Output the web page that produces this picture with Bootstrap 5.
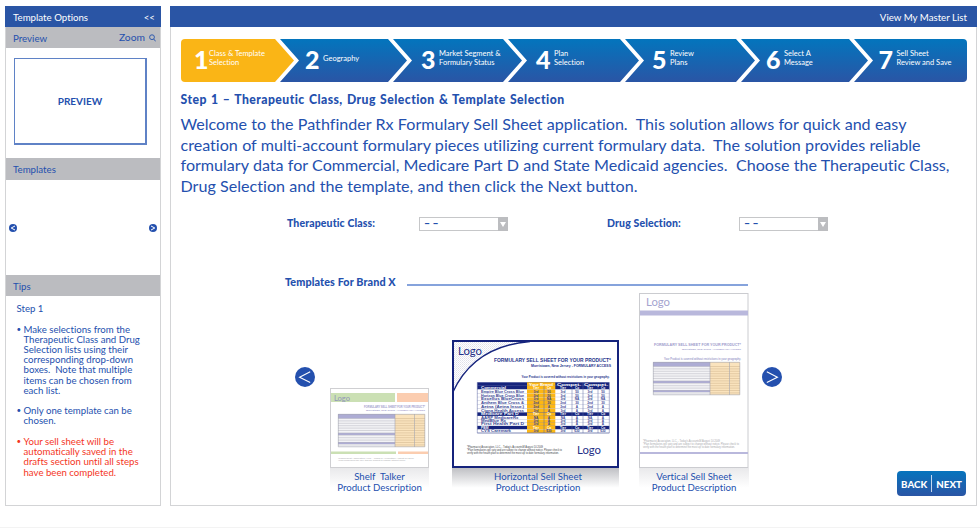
<!DOCTYPE html>
<html lang="en">
<head>
<meta charset="utf-8">
<meta name="viewport" content="width=device-width, initial-scale=1">
<title>Pathfinder Rx Formulary Sell Sheet</title>
<link href="https://cdn.jsdelivr.net/npm/bootstrap@5.3.0/dist/css/bootstrap.min.css" rel="stylesheet">
<style>
:root{--brand:#2a55a5;--ink:#2450ae;--bar:#bbbcc0}
body{font-family:Lato,"Liberation Sans",sans-serif;font-variant-ligatures:none;color:var(--ink);font-size:10px;line-height:1.03;height:528px;overflow:hidden;background:#fff;border-bottom:1px solid #f3f3f3}
.shell{padding:6px 3px 0 5px;gap:9px}
.side{width:156px;height:500px;border:1px solid #d3d4d6}
.main-panel{height:500px;min-width:0;border:1px solid #d3d4d6}
.titlebar{height:21px;background:var(--brand);color:#fff;font-size:9.7px;margin:-1px -1px 0;padding:0 10px 0 8px}
.titlebar.side-title{padding-right:6px}
.greybar{height:21px;background:var(--bar);padding:0 4px 0 7px;font-size:9.7px}
.greybar .zoomer{font-size:10.3px}
.greybar.mid{margin-top:13px;height:22px}
.pager-strip{height:95px;padding:0 3px}
.preview-box{width:133px;height:87px;border:1.5px solid #5f82c6;border-width:1px 2px 2px 1px;margin:10px 0 0 8px;font-size:10px}
.tips{padding:7px 12px 0 10.5px;font-size:9.65px;line-height:10.2px}
.tips .step-name,.tips li{margin-bottom:10.3px}
.tips li{padding-left:7px;position:relative;white-space:nowrap}
.tips li::before{content:"•";position:absolute;left:0;font-size:8px}
.alert-tip{color:#f4361e}
.steps{margin:12px 9px 0 10px;height:43px;border-radius:4px;overflow:hidden}
.stage{height:43px;flex:none;background:linear-gradient(#0375bd,#2a55a5);color:#fff;font-size:7.5px;line-height:8.8px;margin-left:-14px;padding:0 0 3px 27px;
clip-path:polygon(0 0,calc(100% - 19px) 0,100% 50%,calc(100% - 19px) 100%,0 100%,19px 50%);white-space:nowrap}
.stage b{font-size:25px;line-height:40px;width:18px;font-weight:900;flex:none;letter-spacing:-1px}
.stage:first-child{margin-left:0;padding-left:13px;background:#fab516;clip-path:polygon(0 0,calc(100% - 19px) 0,100% 50%,calc(100% - 19px) 100%,0 100%)}
.stage:first-child b{width:15px}
.stage:last-child{clip-path:polygon(0 0,100% 0,100% 100%,0 100%,19px 50%)}
.w1{width:113px}.w2{width:127px;padding-left:25px}.w3{width:129px;padding-left:28px}.w4{width:131px;padding-left:28px}.w5{width:130px}.w7{width:114px;padding-left:24.5px}
.copy{padding:11px 0 0 9.5px}
.copy h1{font-size:12.2px;font-weight:900;line-height:14px;margin:0 0 7px;white-space:nowrap;width:384px;text-align-last:justify;letter-spacing:.45px}
.copy p{font-size:16.1px;line-height:20.6px;margin:0}
.copy p span{display:block;white-space:nowrap;text-align-last:justify}
.fields{margin:20px 0 0 116px;height:15px;font-weight:900;font-size:10.5px}
.fields label{width:132px;white-space:nowrap;letter-spacing:.12px}
.fields .picker{width:89px;height:14px;border:1px solid #c6c7c9;padding-left:4px;background:#fff;margin-right:99px}
.picker i{width:10px;height:14px;background:#bcbdc0;margin-right:-1px}
.brandline{margin:43px 0 0 114px;height:14px;font-weight:900;font-size:10.8px}
.brandline span{width:111px;white-space:nowrap;letter-spacing:.1px}
.brandline hr{width:341px;margin:7px 0 0 11px;height:2px;border:0;background:#86a3dc;opacity:1}
.carousel-row{margin:4px 0 0 124px;height:198px}
.carousel-row svg{display:block}
.round{width:20px;height:20px;flex:none;margin-bottom:103px}
.cap{height:22px;font-size:9.65px;line-height:10.3px;text-align:center;padding-top:3px;background:linear-gradient(#e9e9eb,#fff 90%);white-space:nowrap}
.cap-dark{background:linear-gradient(#bfc0c4,#fff 90%);padding-left:5px}
.navpill{width:69px;height:25px;border-radius:4px;background:linear-gradient(#0674bd,#2a55a5);color:#fff;font-weight:900;font-size:9.7px;position:absolute;right:10px;bottom:9px}
.navpill u{width:1px;height:17px;background:#c5d7ee}
svg text{font-family:Lato,"Liberation Sans",sans-serif}
.tiny text{font-family:"Liberation Sans",sans-serif}
.tiny text.brandmark{font-family:Lato,sans-serif}
</style>
<script src="https://cdn.jsdelivr.net/npm/bootstrap@5.3.0/dist/js/bootstrap.bundle.min.js"></script>
</head>
<body>
<div class="shell d-flex">
  <aside class="side flex-shrink-0">
    <div class="titlebar side-title d-flex justify-content-between align-items-center"><span>Template Options</span><span>&lt;&lt;</span></div>
    <div class="greybar d-flex justify-content-between align-items-center"><span>Preview</span>
      <span class="zoomer d-flex align-items-center">Zoom <svg class="ms-1" width="7" height="8" viewBox="0 0 7 8" fill="none" stroke="#2f5aae"><circle cx="3" cy="3.2" r="2.4"/><path d="M4.7 5 6.7 7.4"/></svg></span></div>
    <div class="preview-box d-flex align-items-center justify-content-center fw-bold">PREVIEW</div>
    <div class="greybar mid d-flex align-items-center">Templates</div>
    <div class="pager-strip d-flex justify-content-between align-items-center">
      <svg width="8" height="8" viewBox="0 0 8 8"><circle cx="4" cy="4" r="4" fill="#2450ae"/><path d="M6 2 2.2 4 6 6" fill="none" stroke="#fff"/></svg>
      <svg width="8" height="8" viewBox="0 0 8 8"><circle cx="4" cy="4" r="4" fill="#2450ae"/><path d="M2 2 5.8 4 2 6" fill="none" stroke="#fff"/></svg>
    </div>
    <div class="greybar d-flex align-items-center">Tips</div>
    <div class="tips">
      <div class="step-name">Step 1</div>
      <ul class="list-unstyled mb-0">
        <li>Make selections from the<br>Therapeutic Class and Drug<br>Selection lists using their<br>corresponding drop-down<br>boxes.&nbsp; Note that multiple<br>items can be chosen from<br>each list.</li>
        <li>Only one template can be<br>chosen.</li>
        <li class="alert-tip">Your sell sheet will be<br>automatically saved in the<br>drafts section until all steps<br>have been completed.</li>
      </ul>
    </div>
  </aside>
  <main class="main-panel flex-grow-1 position-relative">
    <div class="titlebar d-flex justify-content-end align-items-center"><span>View My Master List</span></div>
    <div class="steps d-flex">
      <div class="stage w1 d-flex align-items-center"><b>1</b><span>Class &amp; Template<br>Selection</span></div>
      <div class="stage w2 d-flex align-items-center"><b>2</b><span>Geography</span></div>
      <div class="stage w3 d-flex align-items-center"><b>3</b><span>Market Segment &amp;<br>Formulary Status</span></div>
      <div class="stage w4 d-flex align-items-center"><b>4</b><span>Plan<br>Selection</span></div>
      <div class="stage w5 d-flex align-items-center"><b>5</b><span>Review<br>Plans</span></div>
      <div class="stage w2 d-flex align-items-center"><b>6</b><span>Select A<br>Message</span></div>
      <div class="stage w7 d-flex align-items-center"><b>7</b><span>Sell Sheet<br>Review and Save</span></div>
    </div>
    <div class="copy">
      <h1>Step 1 – Therapeutic Class, Drug Selection &amp; Template Selection</h1>
      <p><span style="width:726px">Welcome to the Pathfinder Rx Formulary Sell Sheet application.&nbsp; This solution allows for quick and easy</span>
      <span style="width:740px">creation of multi-account formulary pieces utilizing current formulary data.&nbsp; The solution provides reliable</span>
      <span style="width:769px">formulary data for Commercial, Medicare Part D and State Medicaid agencies.&nbsp; Choose the Therapeutic Class,</span>
      <span style="width:457px">Drug Selection and the template, and then click the Next button.</span></p>
    </div>
    <div class="fields d-flex align-items-center">
      <label>Therapeutic Class:</label>
      <div class="picker d-flex align-items-center justify-content-between"><span>– –</span><i class="d-flex align-items-center justify-content-center"><svg width="6" height="6"><path d="M0 1h6L3 6z" fill="#fff"/></svg></i></div>
      <label>Drug Selection:</label>
      <div class="picker d-flex align-items-center justify-content-between"><span>– –</span><i class="d-flex align-items-center justify-content-center"><svg width="6" height="6"><path d="M0 1h6L3 6z" fill="#fff"/></svg></i></div>
    </div>
    <div class="brandline d-flex align-items-center"><span>Templates For Brand X</span><hr></div>
    <div class="carousel-row d-flex align-items-end">
      <svg class="round" style="margin-right:15px" viewBox="0 0 20 20"><circle cx="10" cy="10" r="10" fill="#2450ae"/><path d="M15.2 4.8 4.6 10.2 15.2 15.4" fill="none" stroke="#fff" stroke-width="1.1"/></svg>
      <div>
        <svg class="tiny" width="99" height="80" viewBox="330 388 99 80">
          <rect x="330.5" y="388.5" width="98" height="79" fill="#fff" stroke="#cfcfd2"/>
          <path fill="#cbe0b4" d="M331 393h64v9h-64zM331 451.500h65v2.500h-65z"/><path fill="#fbcdb0" d="M397 393h31v9h-31zM398 451.500h30v2.500h-30z"/>
          <text class="brandmark" x="334" y="400.500" font-size="7.5" fill="#8f96b8" textLength="16" lengthAdjust="spacingAndGlyphs">Logo</text>
          <g fill="#a3a0cd" font-weight="bold"><text x="364" y="408" textLength="61" lengthAdjust="spacingAndGlyphs" font-size="2.8">FORMULARY SELL SHEET FOR YOUR PRODUCT*</text><text x="366" y="411.300" textLength="59" lengthAdjust="spacingAndGlyphs" font-size="2.5">Morristown, New Jersey - FORMULARY ACCESS</text></g>
          <g class="ghost" transform="translate(338 414)"></g>
          <g fill="#a8a8ac" font-size="2.500"><text x="338" y="458.500" textLength="76" lengthAdjust="spacingAndGlyphs">*Pharmacist Association, LLC. - Today's AccountsM August 10 2009</text><text x="338" y="461.300" textLength="68" lengthAdjust="spacingAndGlyphs">*Plan formularies will vary and are subject to change without notice.</text></g>
        </svg>
        <div class="cap">Shelf&nbsp; Talker<br>Product Description</div>
      </div>
      <div style="margin-left:23px">
        <svg class="tiny" width="167" height="128" viewBox="452 340 167 128">
          <defs><pattern id="dots" width="2" height="2" patternUnits="userSpaceOnUse"><rect width="2" height="2" fill="#fff"/><rect width="1" height="1" fill="#e0e1ea"/><rect x="1" y="1" width="1" height="1" fill="#eaeaf2"/></pattern></defs>
          <rect x="452" y="340" width="167" height="128" fill="#fff"/>
          <path d="M453 341H528Q474 347 453 391Z" fill="url(#dots)"/>
          <path d="M530 341.500Q474 346 453 392" fill="none" stroke="#15237c" stroke-width="1.300"/>
          <rect x="453" y="341" width="165" height="126" fill="none" stroke="#15237c" stroke-width="2"/>
          <text class="brandmark" x="458" y="355" font-size="11" fill="#1f2f86" textLength="24" lengthAdjust="spacingAndGlyphs">Logo</text>
          <text class="brandmark" x="577" y="454" font-size="11" fill="#1f2f86" textLength="24" lengthAdjust="spacingAndGlyphs">Logo</text>
          <g fill="#26348c" font-weight="bold"><text x="494" y="361.500" font-size="4.800" textLength="117" lengthAdjust="spacingAndGlyphs">FORMULARY SELL SHEET FOR YOUR PRODUCT*</text>
          <text x="531" y="366.800" font-size="3.500" textLength="80" lengthAdjust="spacingAndGlyphs">Morristown, New Jersey - FORMULARY ACCESS</text>
          <text x="521.500" y="378.300" font-size="2.900" textLength="88" lengthAdjust="spacingAndGlyphs">Your Product is covered without restrictions in your geography.</text></g>
          <g id="grid"></g>
          <g fill="#3e3f48" font-size="2.600"><text x="467" y="448" textLength="76" lengthAdjust="spacingAndGlyphs">*Pharmacist Association, LLC. - Today's AccountsM August 10 2009</text><text x="467" y="451.200" textLength="95" lengthAdjust="spacingAndGlyphs">*Plan formularies will vary and are subject to change without notice. Please check to</text><text x="467" y="454.400" textLength="92" lengthAdjust="spacingAndGlyphs">verify with the health plan to determine the most up to date formulary information.</text></g>
        </svg>
        <div class="cap cap-dark">Horizontal Sell Sheet<br>Product Description</div>
      </div>
      <div style="margin-left:20px">
        <svg class="tiny" width="110" height="175" viewBox="639 293 110 175">
          <rect x="639.500" y="293.500" width="108.500" height="174" fill="#fff" stroke="#cbccd0"/>
          <path fill="#b9b8dc" d="M640 310.500h108v5h-108zM640 452h108v2h-108z"/>
          <text class="brandmark" x="646" y="305.500" font-size="11" fill="#a5a4cf" textLength="24" lengthAdjust="spacingAndGlyphs">Logo</text>
          <g fill="#a09dcc" font-weight="bold"><text x="654" y="346" font-size="3.600" textLength="87" lengthAdjust="spacingAndGlyphs">FORMULARY SELL SHEET FOR YOUR PRODUCT*</text><text x="682" y="349.500" font-size="2.500" textLength="59" lengthAdjust="spacingAndGlyphs">Morristown, New Jersey - FORMULARY ACCESS</text><text x="664" y="359.500" font-size="2.600" textLength="77" lengthAdjust="spacingAndGlyphs">Your Product is covered without restrictions in your geography.</text></g>
          <g class="ghost" transform="translate(653 362)"></g>
          <g fill="#a8a8ac" font-size="2.600"><text x="643" y="442" textLength="77" lengthAdjust="spacingAndGlyphs">*Pharmacist Association, LLC. - Today's AccountsM August 10 2009</text><text x="643" y="445.200" textLength="96" lengthAdjust="spacingAndGlyphs">*Plan formularies will vary and are subject to change without notice. Please check to</text><text x="643" y="448.400" textLength="92" lengthAdjust="spacingAndGlyphs">verify with the health plan to determine the most up to date formulary information.</text></g>
        </svg>
        <div class="cap">Vertical Sell Sheet<br>Product Description</div>
      </div>
      <svg class="round" style="margin-left:13px" viewBox="0 0 20 20"><circle cx="10" cy="10" r="10" fill="#2450ae"/><path d="M4.800 4.800 15.400 10.200 4.800 15.400" fill="none" stroke="#fff" stroke-width="1.100"/></svg>
    </div>
    <div class="navpill d-flex align-items-center justify-content-evenly"><span>BACK</span><u></u><span>NEXT</span></div>
  </main>
</div>
<script>
// Blank formulary table used by the two faded templates
document.querySelectorAll('.ghost').forEach(g => {
  let s = '<path fill="#f3f3f6" d="M0 0h57v33H0z"/><path fill="#fae3bd" d="M57 0h30v33H57z"/><path fill="#adacd4" d="M0 0h57v4.500H0zM0 19h57v2H0zM0 28h57v2H0z"/>';
  for (let y = 4.5; y < 32; y += 2.4) s += `<path stroke="#b5b5be" stroke-width=".5" d="M0 ${y}H57"/><path stroke="#cfb28a" stroke-width=".5" d="M57 ${y}H87"/>`;
  g.innerHTML = s + '<path d="M.3.3h86.500v32.500H.3zM57 0v33M76.500 0v33" fill="none" stroke="#a5a6b2" stroke-width=".6"/>';
});
// Formulary table of the selected template: [top, dark row, name, tier, copay]
const rows = [[382.3,1,'','',''],[386,1,'Commercial','Tier','Co'],[389.5,0,'Empire Blue Cross Blue','3rd','50'],[393.5,0,'Horizon Blue Cross Blue','3rd','50'],[397.3,0,'Excellus BlueCross','3rd','NA'],[401,0,'Anthem Blue Cross &amp;','2nd','30'],[405,0,'Aetna (Aetna Insur.)','2nd','A'],[408.8,0,'Cigna Health Access','3rd','A'],[412.5,1,'Medicare Part D','Tier','Co'],[416,0,'AARP MedicareRx','NA','A'],[419.5,0,'MedBlue Rx','3rd','A'],[423,0,'First Health Part D','3rd','A'],[426,1,'PBM','Tier','Co'],[429.5,0,'CVS Caremark','3rd','$30']];
let out = '';
rows.forEach((r, i) => {
  const y = r[0], h = (rows[i + 1] ? rows[i + 1][0] : 433) - y;
  out += `<rect x="477.300" y="${y}" width="132" height="${h}" fill="${r[1] ? '#15237c' : '#fff'}"/><rect x="527" y="${y}" width="28.300" height="${h}" fill="#fdb714"/><path stroke="#8088b4" stroke-width=".5" d="M477.300 ${y + h}H609.300"/>`;
  const f = r[1] ? '#fff' : '#3a4794', b = y + h - .6;
  if (r[2]) out += `<text x="481" y="${b}" font-size="3.200" font-weight="bold" fill="${f}" textLength="${r[2].length > 15 ? 43 : r[2].length * 2.5}" lengthAdjust="spacingAndGlyphs">${r[2]}</text>`;
  [536, 549, 563, 577, 590, 603].forEach((x, k) => out += `<text x="${x}" y="${b}" text-anchor="middle" font-size="3.200" font-weight="bold" fill="${f}">${r[k % 2 ? 4 : 3]}</text>`);
});
[[529, 'Your Brand'], [557, 'Compet.'], [584, 'Compet.']].forEach(c => out += `<text x="${c[0]}" y="385.500" font-size="3.500" font-weight="bold" fill="#fff" textLength="24" lengthAdjust="spacingAndGlyphs">${c[1]}</text>`);
out += '<path d="M477.300 382.300V433H609.300V382.300M544 386v47M572 386v47M583 382v51M598 386v47" fill="none" stroke="#5a64a0" stroke-width=".5"/>';
document.getElementById('grid').innerHTML = out;
</script>
</body>
</html>
